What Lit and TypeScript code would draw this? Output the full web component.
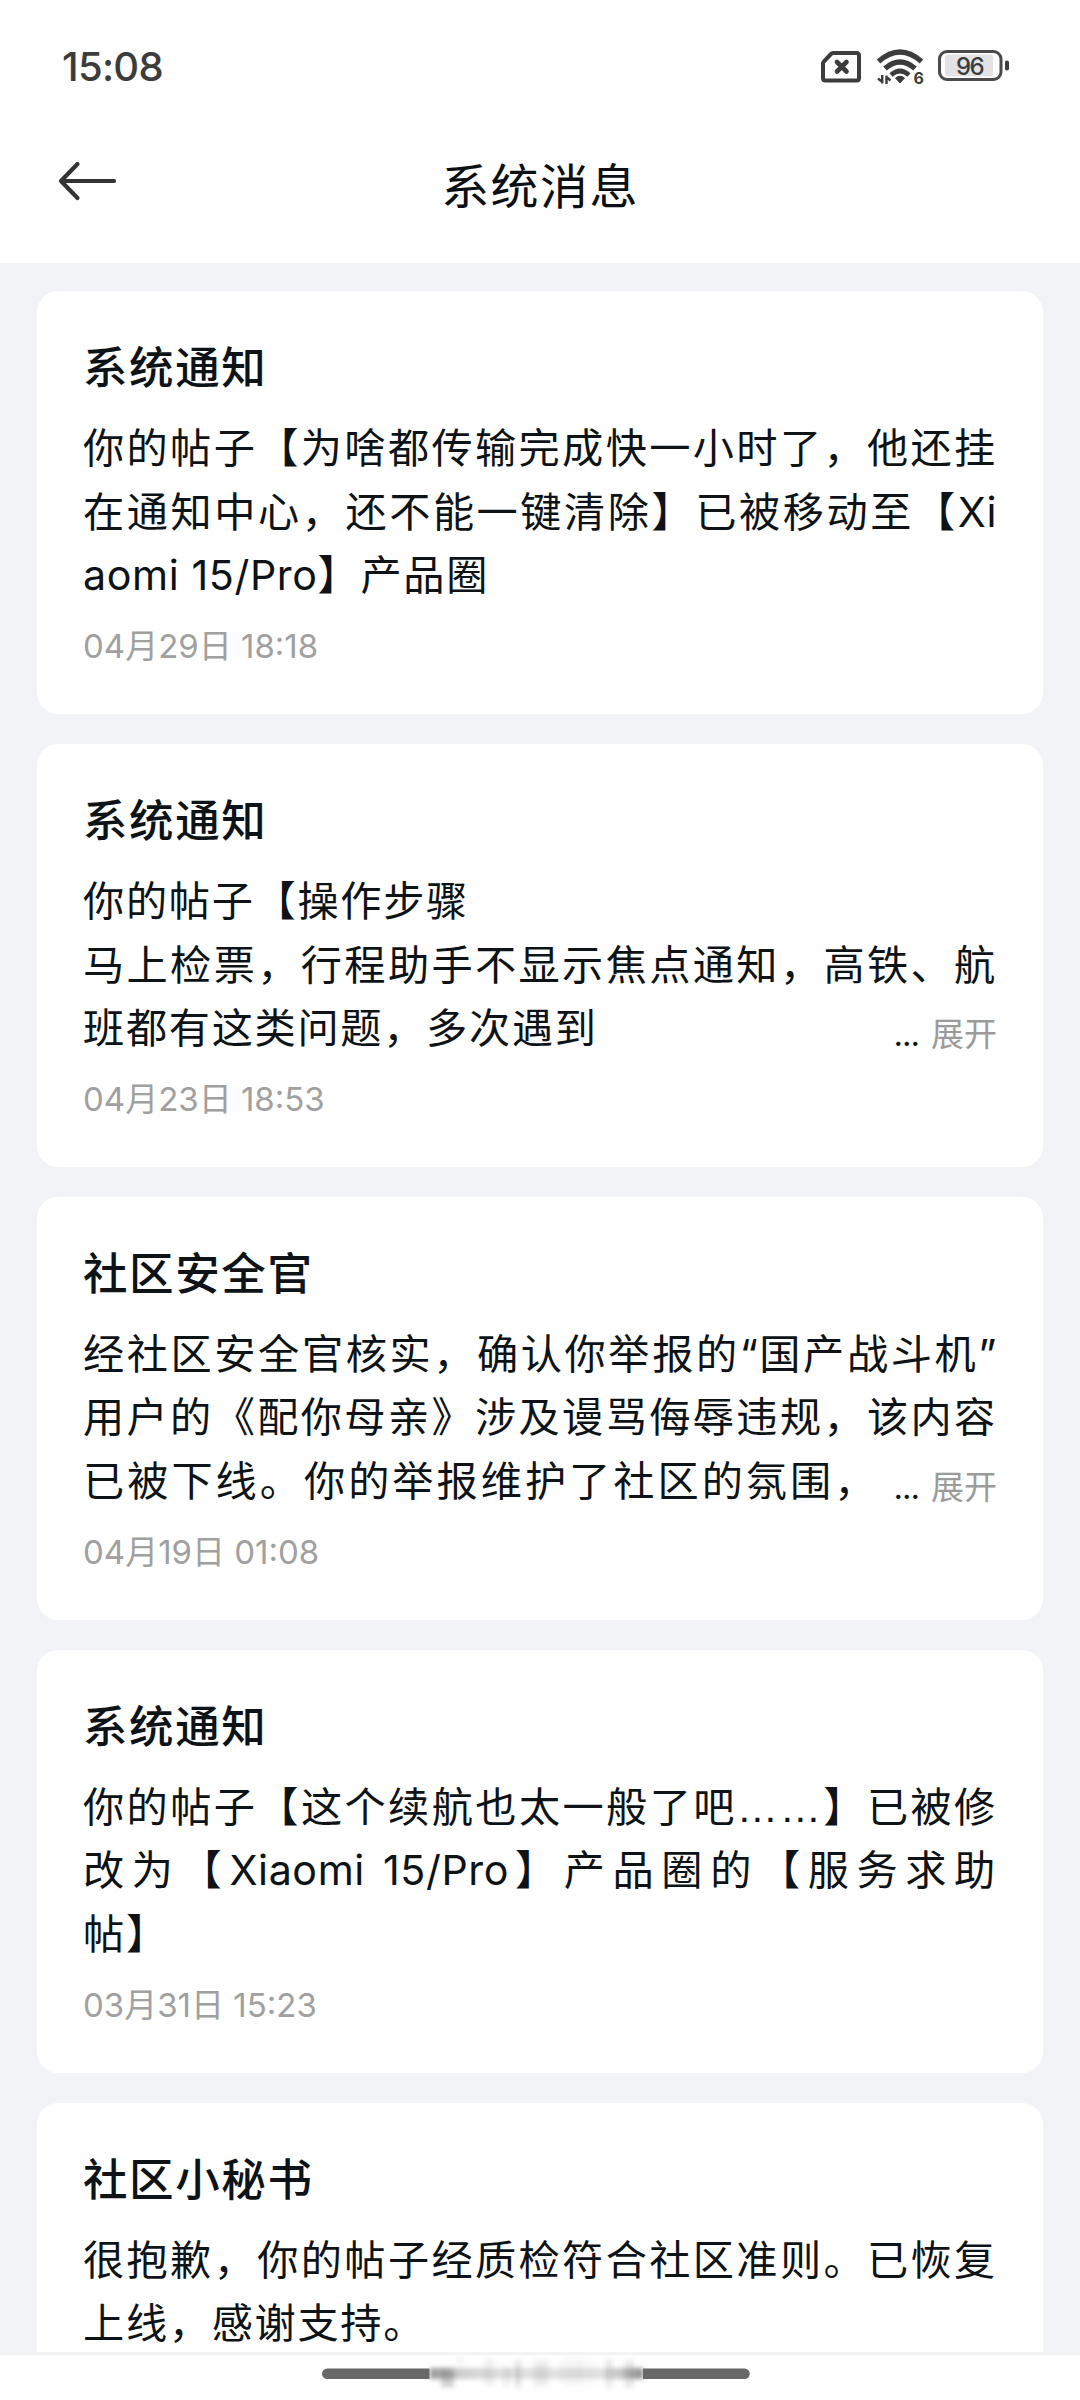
import { LitElement, html, css, svg } from "lit";
import { customElement, property } from "lit/decorators.js";

interface Line {
  text: string;
  fill?: boolean;
  loose?: boolean;
}

interface Notice {
  title: string;
  lines: Line[];
  date?: string;
  more?: boolean;
}

const NOTICES: Notice[] = [
  {
    title: "系统通知",
    lines: [
      { text: "你的帖子【为啥都传输完成快一小时了，他还挂", fill: true },
      { text: "在通知中心，还不能一键清除】已被移动至【Xi", fill: true },
      { text: "aomi 15/Pro】产品圈" },
    ],
    date: "04月29日 18:18",
  },
  {
    title: "系统通知",
    lines: [
      { text: "你的帖子【操作步骤" },
      { text: "马上检票，行程助手不显示焦点通知，高铁、航", fill: true },
      { text: "班都有这类问题，多次遇到" },
    ],
    date: "04月23日 18:53",
    more: true,
  },
  {
    title: "社区安全官",
    lines: [
      { text: "经社区安全官核实，确认你举报的“国产战斗机”", fill: true },
      { text: "用户的《配你母亲》涉及谩骂侮辱违规，该内容", fill: true },
      { text: "已被下线。你的举报维护了社区的氛围，", loose: true },
    ],
    date: "04月19日 01:08",
    more: true,
  },
  {
    title: "系统通知",
    lines: [
      { text: "你的帖子【这个续航也太一般了吧……】已被修", fill: true },
      { text: "改为【Xiaomi 15/Pro】产品圈的【服务求助", fill: true },
      { text: "帖】" },
    ],
    date: "03月31日 15:23",
  },
  {
    title: "社区小秘书",
    lines: [
      { text: "很抱歉，你的帖子经质检符合社区准则。已恢复", fill: true },
      { text: "上线，感谢支持。" },
    ],
  },
];

@customElement("status-bar")
class StatusBar extends LitElement {
  static styles = css`
    :host {
      display: flex;
      justify-content: space-between;
      height: 132px;
      box-sizing: border-box;
      padding: 47px 70px 0 62px;
      color: #3c3c3c;
    }
    .clock {
      font-size: 40px;
      line-height: 40px;
      font-weight: 500;
      letter-spacing: -0.7px;
    }
    .icons {
      display: flex;
      align-items: flex-start;
      gap: 10px;
      padding-top: 1px;
    }
    svg {
      display: block;
    }
    .sim {
      margin-right: 4px;
    }
    .pct {
      font: 500 24px Inter, sans-serif;
      letter-spacing: -1.5px;
    }
    .gen {
      font: 700 16px Inter, sans-serif;
    }
  `;
  render() {
    return html`
      <span class="clock">15:08</span>
      <div class="icons">
        <svg class="sim" width="42" height="36" viewBox="0 0 42 36" fill="none" stroke="#3c3c3c" stroke-width="4" stroke-linejoin="round" stroke-linecap="round">
          <path d="M13 5H36.5Q39 5 39 7.500V30Q39 32.500 36.500 32.500H5.500Q3 32.500 3 30V15.500Q3 14.500 3.800 13.600L11 6Q12 5 13 5Z" />
          <path d="M17 14L26.500 23.500M26.500 14L17 23.500" stroke-width="4.600" />
        </svg>
        <svg width="52" height="40" viewBox="0 0 52 40" fill="none" stroke="#3c3c3c" stroke-width="5.200">
          <path d="M2.500 13.500Q24 -5.500 45.500 13.500" />
          <path d="M9 20.500Q24 7.500 39 20.500" />
          <path d="M15 27Q24 19 33 27" stroke-width="4.600" />
          <path d="M19.500 30Q24 26.500 28.500 30L24 35Z" fill="#3c3c3c" stroke="#3c3c3c" stroke-width="1" stroke-linejoin="round" />
          <path d="M6.200 27V35.500M7 34.500L2 30.500M10.500 36V27.500M9.800 28.500L14.500 32.500" stroke-width="2.400" />
          <text class="gen" x="37.500" y="35.600" fill="#3c3c3c" stroke="none">6</text>
        </svg>
        <svg width="72" height="36" viewBox="0 0 72 36">
          <rect x="1.500" y="3.500" width="61.500" height="28" rx="7.500" fill="none" stroke="#4a4a4a" stroke-width="3" />
          <rect x="7" y="6.500" width="48" height="22" rx="3" fill="#e3e3e3" />
          <rect x="67" y="12.500" width="4" height="10" rx="1.800" fill="#3c3c3c" />
          <text class="pct" x="18" y="26.500" fill="#3c3c3c">96</text>
        </svg>
      </div>
    `;
  }
}

@customElement("title-bar")
class TitleBar extends LitElement {
  static styles = css`
    :host {
      display: grid;
      grid-template-columns: 120px 1fr 120px;
      align-items: center;
      height: 131px;
      box-sizing: border-box;
      padding-bottom: 22px;
    }
    .back {
      margin: -12px 0 0 58px;
      display: block;
    }
    .title {
      text-align: center;
      font-size: 48px;
      line-height: 60px;
      letter-spacing: 1.4px;
      color: #0c1014;
    }
  `;
  render() {
    return html`
      <svg class="back" width="60" height="42" viewBox="0 0 60 42" fill="none" stroke="#333" stroke-width="4.200" stroke-linecap="round" stroke-linejoin="round">
        <path d="M56 21H3M19.500 4L3 21L19.500 38" />
      </svg>
      <div class="title">系统消息</div>
      <span></span>
    `;
  }
}

@customElement("notice-card")
class NoticeCard extends LitElement {
  @property({ attribute: false }) notice!: Notice;

  static styles = css`
    :host {
      display: block;
      height: 422.9px;
      flex: none;
      box-sizing: border-box;
      padding: 46.4px 46px 0;
      border-radius: 21px;
      background: #fff;
      color: #0e1317;
    }
    .title {
      font-size: 44.5px;
      line-height: 62px;
      font-weight: 500;
      letter-spacing: 1.6px;
      white-space: nowrap;
    }
    .body {
      margin-top: 17.7px;
      font-size: 41.2px;
      line-height: 63.6px;
      letter-spacing: 1.7px;
    }
    .line {
      display: flex;
      justify-content: space-between;
      height: 63.6px;
      white-space: nowrap;
    }
    .text.fill {
      flex: 1;
      text-align: justify;
      text-align-last: justify;
    }
    .text.loose {
      letter-spacing: 3px;
    }
    .latin {
      letter-spacing: 0.6px;
    }
    .dots {
      font-family: "Liberation Sans", sans-serif;
    }
    .more {
      padding-top: 6px;
      font-size: 33px;
      letter-spacing: 0;
      color: #9b9b9b;
    }
    .ell {
      color: #0e1317;
      letter-spacing: -1px;
      margin-right: 12px;
    }
    .date {
      margin-top: 16.6px;
      font-size: 33px;
      line-height: 44px;
      color: #a0a0a0;
    }
  `;

  private runs(text: string) {
    return text
      .split(/([A-Za-z0-9\/ ]+|…+|[“”])/)
      .filter((s) => s)
      .map((s) => {
        if (s[0] === "…") return html`<span class="dots">${s}</span>`;
        return /^[A-Za-z0-9“”]/.test(s) ? html`<span class="latin">${s}</span>` : s;
      });
  }

  render() {
    const n = this.notice;
    const last = n.lines.length - 1;
    return html`
      <div class="title">${n.title}</div>
      <div class="body">
        ${n.lines.map(
          (l, i) => html`<div class="line"><span class="text ${l.fill ? "fill" : ""} ${l.loose ? "loose" : ""}">${this.runs(l.text)}</span>${n.more && i === last
            ? html`<span class="more"><span class="ell">...</span>展开</span>`
            : ""}</div>`
        )}
      </div>
      ${n.date ? html`<div class="date">${n.date}</div>` : ""}
    `;
  }
}

// Vertical smudges over the middle of the gesture bar: x, y, width, height, opacity.
const SMUDGES = [
  [120, 14, 13, 18, 0.24],
  [137, 0, 4, 9, 0.08],
  [163, 4, 10, 26, 0.07],
  [183, 12, 5, 19, 0.09],
  [194, 6, 6, 26, 0.14],
  [213, 6, 14, 25, 0.1],
  [241, 4, 24, 26, 0.05],
  [268, 6, 4, 24, 0.05],
  [285, 4, 6, 28, 0.12],
  [304, 6, 9, 26, 0.13],
];

@customElement("gesture-bar")
class GestureBar extends LitElement {
  static styles = css`
    :host {
      display: block;
      flex: none;
      height: 48px;
      box-sizing: border-box;
      border-top: 3px solid #f4f4f5;
      background: #fefefe;
    }
    svg {
      display: block;
      margin: 0 auto;
    }
  `;
  render() {
    return html`
      <svg width="480" height="45" viewBox="-22 0 480 45">
        <defs>
          <linearGradient id="fade">
            <stop offset="0" stop-color="#999" />
            <stop offset="0.130" stop-color="#ccc" />
            <stop offset="0.300" stop-color="#dfdfdf" />
            <stop offset="0.800" stop-color="#e2e2e2" />
            <stop offset="0.930" stop-color="#bbb" />
            <stop offset="1" stop-color="#8c8c8c" />
          </linearGradient>
          <filter id="soft" x="-10%" y="-50%" width="120%" height="200%">
            <feGaussianBlur stdDeviation="2.200" />
          </filter>
        </defs>
        <rect x="108" y="13" width="213" height="11" fill="url(#fade)" filter="url(#soft)" />
        <g filter="url(#soft)">
          ${SMUDGES.map(([x, y, w, h, o]) => svg`<rect x=${x - 1} y=${y} width=${w} height=${h} fill="#444" opacity=${o} />`)}
        </g>
        <path d="M107.500 13.400H5.300A5.300 5.300 0 0 0 5.300 24H107.500Z" fill="#686868" />
        <path d="M321 13.400H422.500A5.300 5.300 0 0 1 422.500 24H321Z" fill="#686868" />
      </svg>
    `;
  }
}

@customElement("app-root")
class AppRoot extends LitElement {
  static styles = css`
    :host {
      display: flex;
      flex-direction: column;
      width: 1080px;
      height: 2400px;
      overflow: hidden;
      background: #fefefe;
      font-family: Inter, "Noto Sans CJK SC", sans-serif;
      text-spacing-trim: space-all;
    }
    .list {
      flex: 1;
      min-height: 0;
      display: flex;
      flex-direction: column;
      gap: 30px;
      box-sizing: border-box;
      padding: 28px 37px 0;
      overflow: hidden;
      background: #f2f3f7;
    }
  `;
  render() {
    return html`
      <status-bar></status-bar>
      <title-bar></title-bar>
      <main class="list">${NOTICES.map((n) => html`<notice-card .notice=${n}></notice-card>`)}</main>
      <gesture-bar></gesture-bar>
    `;
  }
}
